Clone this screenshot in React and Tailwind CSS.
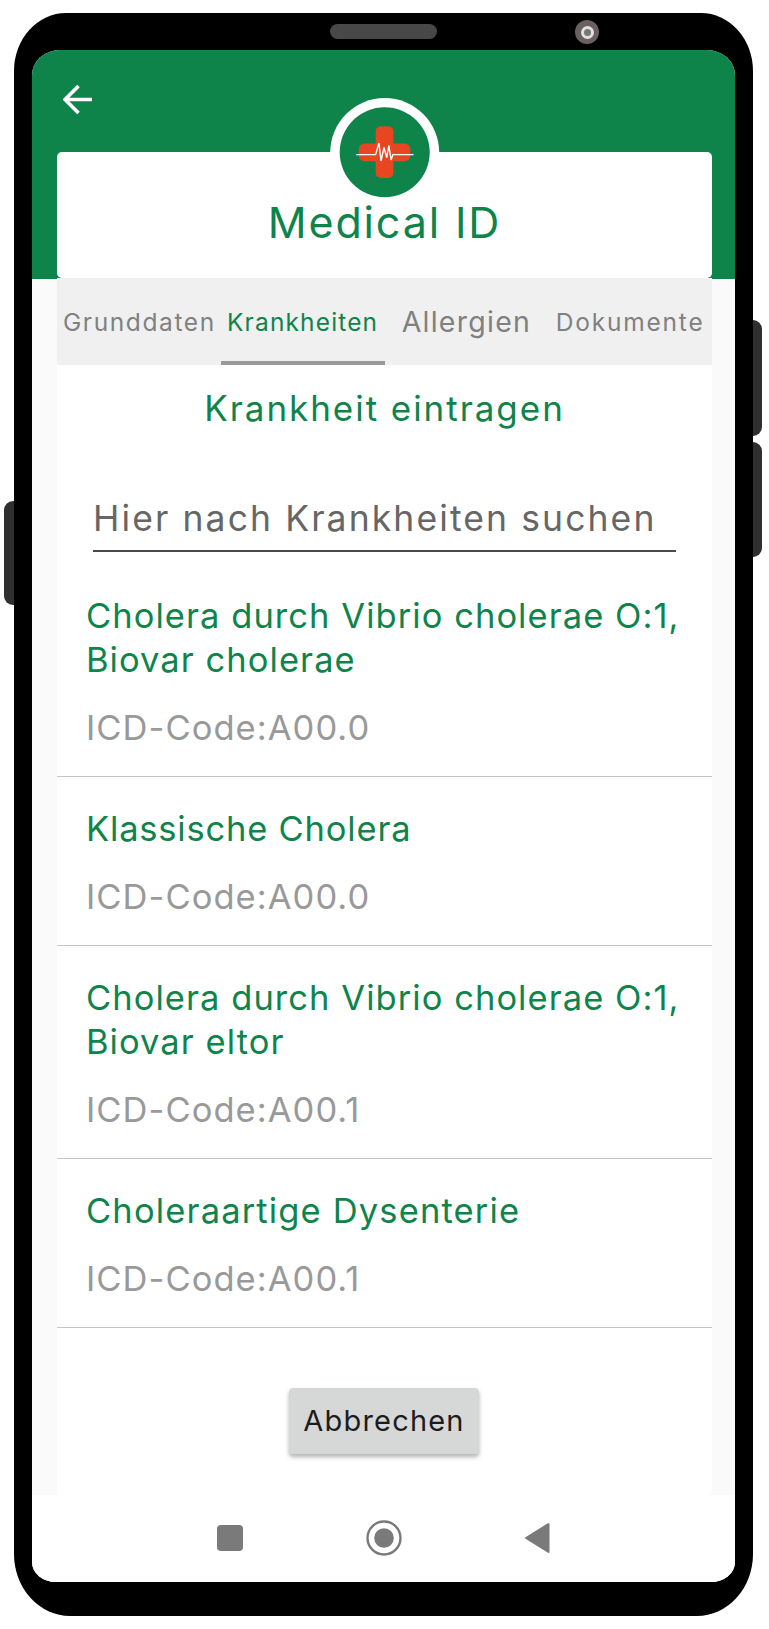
import { useState } from 'react'

const TABS = [
  { id: 'basics', label: 'Grunddaten', className: 'text-[24.5px] tracking-[1.6px] pl-[1px]' },
  { id: 'diseases', label: 'Krankheiten', className: 'text-[24.5px] tracking-[1.15px]' },
  { id: 'allergies', label: 'Allergien', className: 'text-[28.5px] tracking-[1.25px]' },
  { id: 'documents', label: 'Dokumente', className: 'text-[24.5px] tracking-[1.8px]' }
]

const DISEASES = [
  { id: 1, name: 'Cholera durch Vibrio cholerae O:1, Biovar cholerae', code: 'A00.0', className: 'tracking-[1.05px]' },
  { id: 2, name: 'Klassische Cholera', code: 'A00.0', className: 'tracking-[0.8px]' },
  { id: 3, name: 'Cholera durch Vibrio cholerae O:1, Biovar eltor', code: 'A00.1', className: 'tracking-[1.05px]' },
  { id: 4, name: 'Choleraartige Dysenterie', code: 'A00.1', className: 'tracking-[1.15px]' }
]

const BackIcon = () => (
  <svg width="30" height="30" viewBox="0 0 30 30" fill="none" stroke="#fff" strokeWidth="3.6">
    <path d="M29 14.5H3M15.5 1L2 14.5L15.5 28" />
  </svg>
)

const Logo = () => (
  <svg className="shrink-0" width="110" height="110" viewBox="0 0 110 110" fill="none">
    <circle cx="54.7" cy="55.5" r="54.5" fill="#fff" />
    <circle cx="54.7" cy="55.3" r="45" fill="#0e844b" />
    <rect x="45.7" y="29.3" width="17.7" height="51.7" rx="5" fill="#e84522" />
    <rect x="28.7" y="46.5" width="51.7" height="17.7" rx="6" fill="#e84522" />
    <path
      d="M26.2 57.6H45.6L49 46L51 64L54 50.5L56.7 60.5L58.9 48.5L61.1 63L62.9 57.6H83.5"
      stroke="#fff"
      strokeWidth="1.4"
    />
  </svg>
)

const Header = () => (
  <header className="flex flex-col h-[229px] shrink-0 bg-[#0e844b] pl-[25px] pt-[35px]">
    <button className="ml-[6px] size-[30px] shrink-0" aria-label="Zurück">
      <BackIcon />
    </button>
    <div className="flex flex-col items-center mt-[36.5px] w-[655px] h-[126.5px] rounded-[5px] bg-white">
      {/* Logo ragt über die Karte hinaus */}
      <div className="-mt-[54.5px] h-[99.5px]">
        <Logo />
      </div>
      <h1 className="relative text-[43px] leading-[50px] tracking-[1.85px] font-normal text-[#0e844b]">
        Medical ID
      </h1>
    </div>
  </header>
)

const TabBar = ({ activeTab, onTabChange }) => (
  <nav className="grid grid-cols-4 h-[87px] bg-[#f0f0f0]">
    {TABS.map((tab) => (
      <button
        key={tab.id}
        onClick={() => onTabChange(tab.id)}
        className={`flex items-center justify-center whitespace-nowrap border-b-[4px] pt-[6px] ${tab.className} ${
          activeTab === tab.id ? 'border-[#999999] text-[#0e844b]' : 'border-transparent text-[#808080]'
        }`}
      >
        {tab.label}
      </button>
    ))}
  </nav>
)

const DiseaseItem = ({ disease }) => (
  <li className="flex flex-col gap-[24px] border-b border-[#c4c4c4] pl-[29px] pr-6 pt-[30px] pb-[26px] text-[34.5px] leading-[44px]">
    <p className={`text-[#0e844b] ${disease.className}`}>{disease.name}</p>
    <p className="tracking-[1.05px] text-[#999999]">ICD-Code:{disease.code}</p>
  </li>
)

const SystemNav = () => (
  <div className="flex justify-center h-[87px] shrink-0 pt-[25px] pr-[1px] bg-white">
    <svg width="334" height="36" viewBox="0 0 334 36" fill="#7a7a7a">
      <rect x="1" y="5" width="26" height="26" rx="4" />
      <circle cx="168" cy="18" r="16.5" fill="none" stroke="#7a7a7a" strokeWidth="2.4" />
      <circle cx="168" cy="18" r="9.8" />
      <path
        d="M310 18L332.5 4V32Z"
        stroke="#7a7a7a"
        strokeWidth="2"
        strokeLinejoin="round"
      />
    </svg>
  </div>
)

const App = () => {
  const [activeTab, setActiveTab] = useState('diseases')

  return (
    <div className="flex w-[769px] h-[1629px] overflow-hidden bg-white pl-[4px] pt-[13px] font-['Inter',sans-serif]">
      {/* Linke Taste */}
      <div className="mt-[488px] w-[10px] h-[104px] shrink-0 rounded-l-[9px] bg-[#2f2f2f]"></div>

      {/* Gehäuse */}
      <div className="flex flex-col w-[739px] h-[1603px] shrink-0 bg-black rounded-[52px_52px_56px_56px/58px_58px_62px_62px] pl-[18px]">
        <div className="flex h-[37px] shrink-0 pt-[7px] pl-[298px] gap-[138px]">
          <div className="mt-[4px] w-[107px] h-[15px] rounded-full bg-[#484848]"></div>
          <div className="flex items-center justify-center size-[24px] rounded-full bg-[#696060]">
            <div className="size-[13px] rounded-full border-[3px] border-[#e0e0e0] bg-[#777777]"></div>
          </div>
        </div>

        {/* Display */}
        <div className="flex flex-col w-[702.5px] h-[1532px] overflow-hidden rounded-[28px_28px_24px_24px/25px_25px_20px_20px] bg-white">
          <Header />
          <div className="h-[1216px] shrink-0 bg-[#fafafa] pl-[25px]">
            <main className="flex flex-col w-[655px] h-[1216px] rounded-b-[5px] bg-white">
              <div className="-mt-px">
                <TabBar activeTab={activeTab} onTabChange={setActiveTab} />
              </div>
              <h2 className="mt-[21px] text-center text-[35px] leading-[44px] tracking-[1.95px] font-normal text-[#0e844b]">
                Krankheit eintragen
              </h2>
              <div className="mt-[67px] ml-[36px] w-[583px] pb-[9px] border-b-2 border-[#4a4a4a] whitespace-nowrap text-[35.5px] leading-[44px] tracking-[2.1px] text-[#666666]">
                Hier nach Krankheiten suchen
              </div>
              <ul className="mt-[12px]">
                {DISEASES.map((disease) => (
                  <DiseaseItem key={disease.id} disease={disease} />
                ))}
              </ul>
              <button className="self-center mt-[60px] mr-[1px] w-[190px] h-[66px] rounded-[4px] bg-[#d6d8d7] shadow-[0_3px_4px_rgba(0,0,0,0.3)] text-[29px] tracking-[1.2px] text-[#1c1c1c]">
                Abbrechen
              </button>
            </main>
          </div>
          <SystemNav />
        </div>
      </div>

      {/* Lautstärketasten */}
      <div className="flex flex-col gap-[6px] mt-[307px]">
        <div className="w-[9px] h-[116px] rounded-r-[9px] bg-[#2f2f2f]"></div>
        <div className="w-[9px] h-[115px] rounded-r-[9px] bg-[#2f2f2f]"></div>
      </div>
    </div>
  )
}

export default App
